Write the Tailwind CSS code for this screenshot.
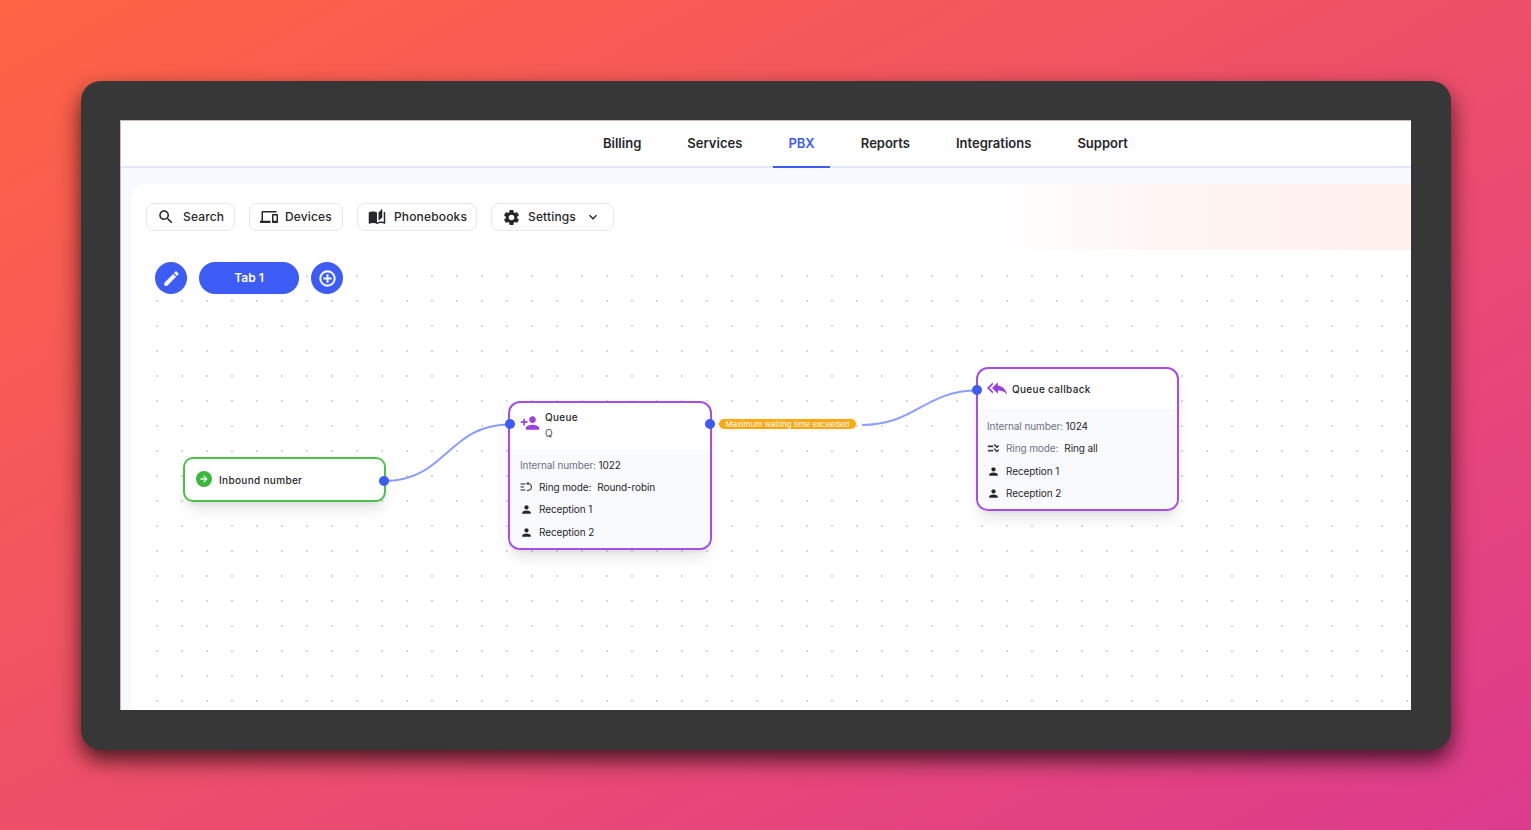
<!DOCTYPE html>
<html lang="en">
<head>
  <meta charset="UTF-8" />
  <meta name="viewport" content="width=device-width, initial-scale=1.0" />
  <title>PBX</title>
  <script src="https://cdn.jsdelivr.net/npm/@tailwindcss/browser@4"></script>
</head>
<body class="h-screen overflow-hidden pl-[81px] pt-[81px] bg-[linear-gradient(to_bottom_right,#ff6444,#dd3b8e)] font-[Inter,sans-serif] text-[#27272a]">

<div class="w-[1370px] h-[669px] pl-[39px] pt-[39px] rounded-[20px] bg-[#373737] shadow-[0_10px_22px_rgba(0,0,0,0.7)]">
  <div class="w-[1291px] h-[590px] flex flex-col overflow-hidden bg-[#f8f9ff] border-l border-t border-[#cdb8b8]">

    <!-- top nav -->
    <nav class="h-[47px] shrink-0 pl-[467px] flex gap-[16.100px] bg-white border-b-2 border-[#e5e7f8] text-[13px] font-semibold">
      <a class="h-[47px] px-[15px] pt-[13px]">Billing</a>
      <a class="h-[47px] px-[15px] pt-[13px]">Services</a>
      <a class="h-[47px] px-[15px] pt-[13px] text-[#3d5cf5] border-b-2 border-[#3d5cf5]">PBX</a>
      <a class="h-[47px] px-[15px] pt-[13px]">Reports</a>
      <a class="h-[47px] px-[15px] pt-[13px]">Integrations</a>
      <a class="h-[47px] px-[15px] pt-[13px]">Support</a>
    </nav>

    <div class="flex-1 ml-[10px] mt-[16px] flex flex-col bg-white rounded-tl-[16px] overflow-hidden">
      <!-- toolbar -->
      <div class="h-[66px] shrink-0 pl-[15px] pt-[19px] flex items-start gap-[14px] bg-[linear-gradient(to_right,#ffffff_67%,#fff6f4_80%,#ffefed_100%)] text-[12px] font-[550] tracking-[0.15px]">
        <button class="h-[28px] w-[89px] pl-[10px] flex items-center gap-[8px] bg-white border border-[#e5e7eb] rounded-lg">
          <svg class="w-[18px] h-[18px]" viewBox="0 0 24 24" fill="currentColor"><path d="M15.5 14h-.79l-.28-.27C15.41 12.59 16 11.11 16 9.5 16 5.91 13.09 3 9.5 3S3 5.91 3 9.5 5.91 16 9.5 16c1.61 0 3.09-.59 4.23-1.57l.27.28v.79l5 4.99L20.49 19l-4.99-5zm-6 0C7.01 14 5 11.99 5 9.5S7.01 5 9.5 5 14 7.01 14 9.5 11.99 14 9.5 14z"/></svg>
          Search
        </button>
        <button class="h-[28px] w-[94px] pl-[10px] flex items-center gap-[7px] bg-white border border-[#e5e7eb] rounded-lg">
          <svg class="w-[18px] h-[18px]" viewBox="0 0 24 24" fill="currentColor"><path d="M4 6h18V4H4c-1.1 0-2 .9-2 2v11H0v3h14v-3H4V6zm19 2h-6c-.55 0-1 .45-1 1v10c0 .55.45 1 1 1h6c.55 0 1-.45 1-1V9c0-.55-.45-1-1-1zm-1 9h-4v-7h4v7z"/></svg>
          Devices
        </button>
        <button class="h-[28px] w-[120px] pl-[10px] flex items-center gap-[8px] bg-white border border-[#e5e7eb] rounded-lg">
          <svg class="w-[18px] h-[18px]" viewBox="0 0 24 24" fill="currentColor"><path d="M19 1l-5 5v11l5-4.5V1zM1 6v14.65c0 .25.25.5.5.5.1 0 .15-.05.25-.05C3.1 20.45 5.05 20 6.5 20c1.95 0 4.05.4 5.5 1.5V6c-1.45-1.1-3.55-1.5-5.5-1.5S2.45 4.9 1 6zm22 13.5V6c-.6-.45-1.25-.75-2-1v13.5c-1.1-.35-2.3-.5-3.5-.5-1.7 0-4.15.65-5.5 1.5v2c1.35-.85 3.8-1.5 5.5-1.5 1.65 0 3.35.3 4.75 1.05.1.05.15.05.25.05.25 0 .5-.25.5-.5v-1.1z"/></svg>
          Phonebooks
        </button>
        <button class="h-[28px] w-[123px] pl-[10px] flex items-center gap-[7px] bg-white border border-[#e5e7eb] rounded-lg">
          <svg class="w-[19px] h-[19px]" viewBox="0 0 24 24" fill="currentColor"><path d="M19.14 12.94c.04-.3.06-.61.06-.94 0-.32-.02-.64-.07-.94l2.03-1.58c.18-.14.23-.41.12-.61l-1.92-3.32c-.12-.22-.37-.29-.59-.22l-2.39.96c-.5-.38-1.03-.7-1.62-.94l-.36-2.54c-.04-.24-.24-.41-.48-.41h-3.84c-.24 0-.43.17-.47.41l-.36 2.54c-.59.24-1.13.57-1.62.94l-2.39-.96c-.22-.08-.47 0-.59.22L2.74 8.87c-.12.21-.08.47.12.61l2.03 1.58c-.05.3-.09.63-.09.94s.02.64.07.94l-2.03 1.58c-.18.14-.23.41-.12.61l1.92 3.32c.12.22.37.29.59.22l2.39-.96c.5.38 1.03.7 1.62.94l.36 2.54c.05.24.24.41.48.41h3.84c.24 0 .44-.17.47-.41l.36-2.54c.59-.24 1.13-.56 1.62-.94l2.39.96c.22.08.47 0 .59-.22l1.92-3.32c.12-.22.07-.47-.12-.61l-2.01-1.58zM12 15.6c-1.98 0-3.6-1.62-3.6-3.6s1.62-3.6 3.6-3.6 3.6 1.62 3.6 3.6-1.62 3.6-3.6 3.6z"/></svg>
          Settings
          <svg class="w-[16px] h-[16px] ml-[2px]" viewBox="0 0 24 24" fill="currentColor"><path d="M16.59 8.59L12 13.17 7.41 8.59 6 10l6 6 6-6z"/></svg>
        </button>
      </div>

      <!-- flow canvas -->
      <div class="relative flex-1">
        <svg class="absolute inset-0 w-full h-full" fill="none">
          <defs>
            <pattern id="dots" width="25" height="25" patternUnits="userSpaceOnUse">
              <rect width="2" height="2" fill="#d8d8d8"/>
            </pattern>
          </defs>
          <rect x="25" y="25" width="1270" height="440" fill="url(#dots)"/>
          <path d="M253 231 C 316 231 316 174.500 379 174.500" stroke="#8b9dff" stroke-width="2"/>
          <path d="M731 175 C 784 175 794 140.500 846 140.500" stroke="#8b9dff" stroke-width="2"/>
        </svg>

        <!-- tabs -->
        <div class="relative flex gap-3 pl-[24px] pt-[12px]">
          <button class="w-[32px] h-[32px] flex items-center justify-center rounded-full bg-[#3d5cf5] text-white">
            <svg class="w-[19px] h-[19px]" viewBox="0 0 24 24" fill="currentColor"><path d="M3 17.25V21h3.75L17.81 9.940l-3.750-3.750L3 17.250zM20.710 7.040c.390-.390.390-1.020 0-1.410l-2.340-2.340c-.390-.390-1.020-.390-1.410 0l-1.830 1.830 3.750 3.750 1.830-1.830z"/></svg>
          </button>
          <button class="w-[100px] h-[32px] rounded-full bg-[#3d5cf5] text-white text-[12px] font-semibold">Tab 1</button>
          <button class="w-[32px] h-[32px] flex items-center justify-center rounded-full bg-[#3d5cf5] text-white">
            <svg class="w-[19px] h-[19px]" viewBox="0 0 24 24" fill="currentColor" stroke="currentColor" stroke-width="0.5"><path d="M13 7h-2v4H7v2h4v4h2v-4h4v-2h-4V7zm-1-5C6.480 2 2 6.480 2 12s4.480 10 10 10 10-4.480 10-10S17.520 2 12 2zm0 18c-4.410 0-8-3.590-8-8s3.590-8 8-8 8 3.590 8 8-3.590 8-8 8z"/></svg>
          </button>
        </div>

        <!-- inbound node -->
        <div class="absolute left-[52px] top-[207px] w-[203px] h-[45px] pl-[11px] flex items-center gap-[7px] bg-white border-2 border-[#4cbf4c] rounded-[10px] shadow-lg text-[10px] font-medium">
          <span class="w-[16px] h-[16px] -mt-[2px] flex items-center justify-center rounded-full bg-[#3bb83b] text-white">
            <svg class="w-[10px] h-[10px]" viewBox="0 0 24 24" fill="currentColor" stroke="currentColor"><path d="M12 4l-1.410 1.410L16.170 11H4v2h12.170l-5.580 5.590L12 20l8-8z"/></svg>
          </span>
          <span class="mt-[1px] tracking-[0.33px]">Inbound number</span>
        </div>

        <!-- queue node -->
        <div class="absolute left-[377px] top-[151px] w-[204px] h-[149px] flex flex-col overflow-hidden bg-white border-2 border-[#a64fe6] rounded-[12px] shadow-lg text-[10px] tracking-[-0.1px]">
          <div class="h-[47px] shrink-0 pl-[10px] pt-[7px] flex gap-[5px]">
            <svg class="w-[20px] h-[20px] mt-[3px] text-[#9a3fe0]" viewBox="0 0 24 24" fill="currentColor"><path d="M15 12c2.210 0 4-1.790 4-4s-1.790-4-4-4-4 1.790-4 4 1.790 4 4 4zm-9-2V7H4v3H1v2h3v3h2v-3h3v-2H6zm9 4c-2.670 0-8 1.340-8 4v2h16v-2c0-2.660-5.330-4-8-4z"/></svg>
            <div>
              <div class="font-medium leading-[14px] tracking-[0.3px]">Queue</div>
              <div class="leading-[14px] mt-[2px] text-[#52525b]">Q</div>
            </div>
          </div>
          <div class="flex-1 pl-[10px] pt-[8px] flex flex-col gap-[7.500px] bg-[#f8fafc] leading-[15px]">
            <div class="-mb-[1px]"><span class="text-[#6b7280]">Internal number:</span> <span>1022</span></div>
            <div class="flex items-center">
              <svg class="w-[12px] h-[12px] mr-[7px]" viewBox="0 0 24 24" fill="none" stroke="currentColor" stroke-width="2"><path d="M1 6h10M1 12h7M1 18h10"/><path d="M14 5h2a7 7 0 0 1 0 14h-2"/><path d="M17 2l-3 3 3 3" /></svg>
              <span>Ring mode:</span><span class="ml-[6px]">Round-robin</span>
            </div>
            <div class="flex items-center">
              <svg class="w-[13px] h-[13px] mr-[6px]" viewBox="0 0 24 24" fill="currentColor"><path d="M12 12c2.210 0 4-1.790 4-4s-1.790-4-4-4-4 1.790-4 4 1.790 4 4 4zm0 2c-2.670 0-8 1.340-8 4v2h16v-2c0-2.660-5.330-4-8-4z"/></svg>
              Reception 1
            </div>
            <div class="flex items-center">
              <svg class="w-[13px] h-[13px] mr-[6px]" viewBox="0 0 24 24" fill="currentColor"><path d="M12 12c2.210 0 4-1.790 4-4s-1.790-4-4-4-4 1.790-4 4 1.790 4 4 4zm0 2c-2.670 0-8 1.340-8 4v2h16v-2c0-2.660-5.330-4-8-4z"/></svg>
              Reception 2
            </div>
          </div>
        </div>

        <!-- callback node -->
        <div class="absolute left-[845px] top-[117px] w-[203px] h-[144px] flex flex-col overflow-hidden bg-white border-2 border-[#a64fe6] rounded-[12px] shadow-lg text-[10px] tracking-[-0.1px]">
          <div class="h-[41px] shrink-0 pl-[9px] flex items-center gap-[5px]">
            <svg class="w-[20px] h-[20px] -mt-[4px] text-[#9a3fe0]" viewBox="0 0 24 24" fill="currentColor"><path d="M7 8V5l-7 7 7 7v-3l-4-4 4-4zm6 1V5l-7 7 7 7v-4.100c5 0 8.500 1.600 11 5.100-1-5-4-10-11-11z"/></svg>
            <span class="font-medium tracking-[0.33px]">Queue callback</span>
          </div>
          <div class="flex-1 pl-[9px] pt-[8px] flex flex-col gap-[7.500px] bg-[#f8fafc] border-t border-[#f1f5f9] leading-[15px]">
            <div class="-mb-[0.500px]"><span class="text-[#6b7280]">Internal number:</span> <span>1024</span></div>
            <div class="flex items-center">
              <svg class="w-[13px] h-[13px] mr-[6px] -scale-x-100" viewBox="0 0 24 24" fill="currentColor" stroke="currentColor" stroke-width="0.8"><path d="M22 7h-9v2h9V7zm0 8h-9v2h9v-2zM5.540 11L2 7.460l1.410-1.410 2.120 2.120 4.240-4.240 1.410 1.410L5.540 11zm0 8L2 15.460l1.410-1.410 2.120 2.120 4.240-4.240 1.410 1.410L5.540 19z"/></svg>
              <span class="text-[#6b7280]">Ring mode:</span><span class="ml-[6px]">Ring all</span>
            </div>
            <div class="flex items-center">
              <svg class="w-[13px] h-[13px] mr-[6px]" viewBox="0 0 24 24" fill="currentColor"><path d="M12 12c2.210 0 4-1.790 4-4s-1.790-4-4-4-4 1.790-4 4 1.790 4 4 4zm0 2c-2.670 0-8 1.340-8 4v2h16v-2c0-2.660-5.330-4-8-4z"/></svg>
              Reception 1
            </div>
            <div class="flex items-center">
              <svg class="w-[13px] h-[13px] mr-[6px]" viewBox="0 0 24 24" fill="currentColor"><path d="M12 12c2.210 0 4-1.790 4-4s-1.790-4-4-4-4 1.790-4 4 1.790 4 4 4zm0 2c-2.670 0-8 1.340-8 4v2h16v-2c0-2.660-5.330-4-8-4z"/></svg>
              Reception 2
            </div>
          </div>
        </div>

        <!-- edge label -->
        <span class="absolute left-[588px] top-[169px] w-[137px] h-[10px] flex items-center justify-center rounded-full bg-[#ffa70f] text-white text-[8px] leading-none whitespace-nowrap">Maximum waiting time exceeded</span>

        <!-- handles -->
        <span class="absolute left-[248px] top-[226px] w-[10px] h-[10px] rounded-full bg-[#3d5cf5]"></span>
        <span class="absolute left-[374px] top-[169px] w-[10px] h-[10px] rounded-full bg-[#3d5cf5]"></span>
        <span class="absolute left-[574px] top-[169px] w-[10px] h-[10px] rounded-full bg-[#3d5cf5]"></span>
        <span class="absolute left-[841px] top-[135px] w-[10px] h-[10px] rounded-full bg-[#3d5cf5]"></span>
      </div>
    </div>
  </div>
</div>

</body>
</html>
